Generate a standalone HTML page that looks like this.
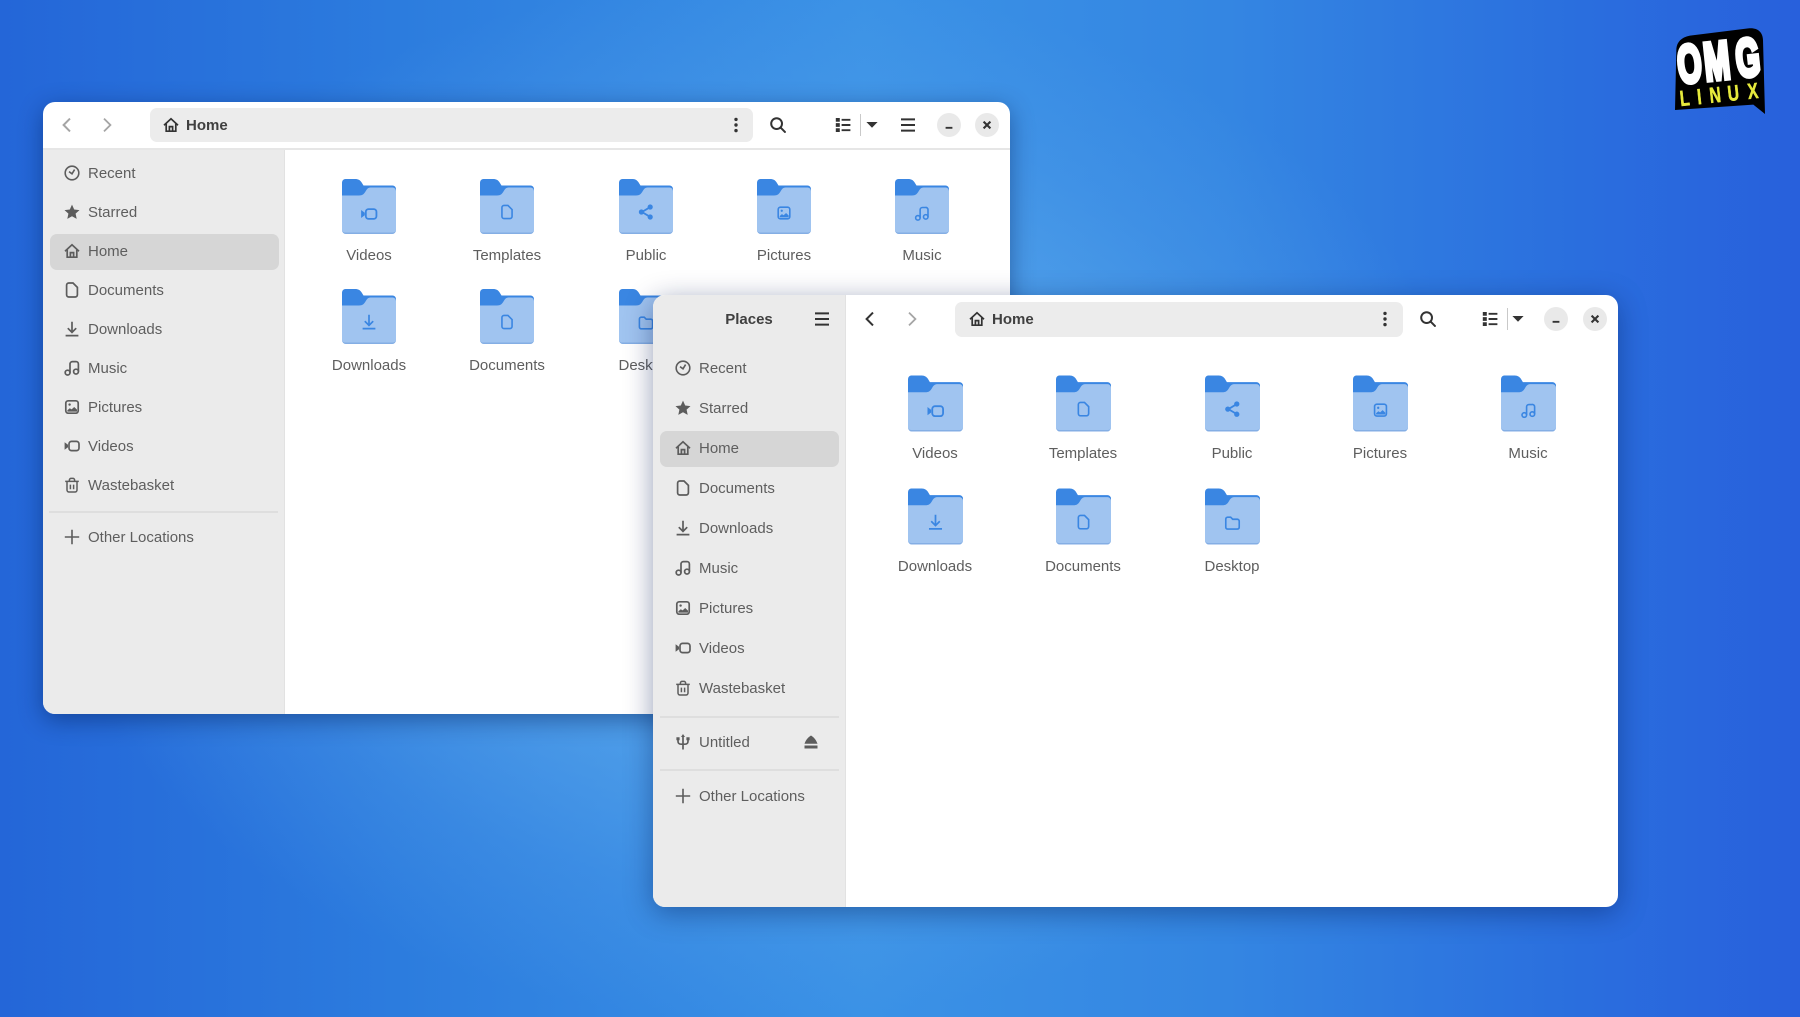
<!DOCTYPE html>
<html lang="en">
<head>
<meta charset="utf-8">
<title>Files</title>
<style>
html,body{margin:0;padding:0;width:1800px;height:1017px;overflow:hidden}
body{position:relative;font-family:"Liberation Sans",sans-serif;background-color:#2f7ee0;
background-image:radial-gradient(ellipse 720px 520px at 760px 500px,rgba(108,184,240,.85) 0%,rgba(100,176,238,.6) 40%,rgba(90,165,235,.25) 75%,rgba(90,165,235,0) 100%),linear-gradient(90deg,#2466d8 0%,#2c7cde 22%,#3b92e6 48%,#3486e2 68%,#2a6ede 88%,#2860dc 100%)}
.win{position:absolute;background:#fff;border-radius:12px;overflow:hidden;filter:blur(.35px)}
.shadow{position:absolute;border-radius:12px}
.side{position:absolute;left:0;background:#ebebeb}
.t{position:absolute;font-size:15px;line-height:20px;margin-top:-9px;color:#5e5e5e;white-space:nowrap}
.c{transform:translateX(-50%)}
.b{font-weight:bold;color:#404040}
.i{position:absolute;width:16px;height:16px;margin:-8px 0 0 -8px;color:#5c5c5c;overflow:visible}
.d{color:#333}
.l{color:#a5a5a5}
.f{position:absolute;color:#3a86e2}
.hl{position:absolute;background:#d6d6d6;border-radius:7px}
.path{position:absolute;background:#ececec;border-radius:7px}
.rnd{position:absolute;width:24px;height:24px;margin:-12px 0 0 -12px;border-radius:50%;background:#e9e9e9}
.hr{position:absolute;height:2px;background:#dedede}
.vr{position:absolute;width:1px;height:22px;background:#c9c9c9}
</style>
</head>
<body>
<svg width="0" height="0" style="position:absolute">
<defs>
<symbol id="clock" viewBox="0 0 16 16"><g fill="none" stroke="currentColor" stroke-width="1.6"><circle cx="8" cy="8" r="6.8"/><path d="M5 6.6 8 8.8 10.6 4.6"/></g></symbol>
<symbol id="star" viewBox="0 0 16 16"><path fill="currentColor" d="M8 .6l2.2 4.9 5.3.6-3.9 3.5 1.1 5.3L8 12.2l-4.7 2.7 1.1-5.3L.5 6.1l5.3-.6z"/></symbol>
<symbol id="home" viewBox="0 0 16 16"><g fill="none" stroke="currentColor" stroke-width="1.7"><path d="M1 8.2 8 1.800l7 6.400"/><path d="M3.200 6.600V14.200h9.600V6.600"/><path d="M6.400 14V9.600h3.200V14"/></g></symbol>
<symbol id="doc" viewBox="0 0 16 16"><path fill="none" stroke="currentColor" stroke-width="1.7" d="M2.600 3.200A2.200 2.200 0 0 1 4.800 1H9l4.400 4.400v7.400A2.200 2.200 0 0 1 11.200 15H4.800a2.200 2.200 0 0 1-2.200-2.200z"/></symbol>
<symbol id="dl" viewBox="0 0 16 16"><g fill="none" stroke="currentColor" stroke-width="1.7"><path d="M8 .8v10.400"/><path d="M3.800 7.200 8 11.400l4.200-4.200"/><path d="M1.600 14.600h12.800"/></g></symbol>
<symbol id="music" viewBox="0 0 16 16"><g fill="none" stroke="currentColor" stroke-width="1.7"><circle cx="3.600" cy="12.600" r="2.400"/><circle cx="12" cy="11.600" r="2.400"/><path d="M6 12.600V4a2.400 2.400 0 0 1 2.400-2.400h3.200A2.400 2.400 0 0 1 14.400 4v7.600"/></g></symbol>
<symbol id="pic" viewBox="0 0 16 16"><rect x="1.800" y="1.800" width="12.400" height="12.400" rx="2.400" fill="none" stroke="currentColor" stroke-width="1.700"/><circle cx="5.600" cy="5.600" r="1.200" fill="currentColor"/><path fill="currentColor" d="M3.400 12.600v-1.400l2.400-2 1.800 1.200 2.600-2.400 2.800 2.600v2z"/></symbol>
<symbol id="vid" viewBox="0 0 16 16"><rect x="5" y="3.400" width="10" height="9.200" rx="2.600" fill="none" stroke="currentColor" stroke-width="1.700"/><path fill="currentColor" d="M.6 4.200 4 6.800v2.400L.6 11.800z"/></symbol>
<symbol id="trash" viewBox="0 0 16 16"><g fill="none" stroke="currentColor" stroke-width="1.500"><path d="M1.200 4.400h13.600"/><path d="M5.400 4.400V3A1.600 1.600 0 0 1 7 1.400h2A1.600 1.600 0 0 1 10.600 3v1.400"/><path d="M3 4.400V13a2 2 0 0 0 2 2h6a2 2 0 0 0 2-2V4.400"/><path d="M6.400 7.600v4.600M9.600 7.600v4.600"/></g></symbol>
<symbol id="plus" viewBox="0 0 16 16"><path fill="none" stroke="currentColor" stroke-width="1.600" d="M8 .8v14.400M.8 8h14.400"/></symbol>
<symbol id="usb" viewBox="0 0 16 16"><g fill="none" stroke="currentColor" stroke-width="1.700"><path d="M8 1.500V15.500"/><path d="M3 5v2.200C3 9 4.200 10.200 6 10.200h4c1.800 0 3-1.200 3-3V5"/></g><path fill="currentColor" d="M8 0l2 3H6zM1.400 3.200h3.200v3H1.400zM11.400 3.200h3.200v3h-3.200z"/></symbol>
<symbol id="eject" viewBox="0 0 16 16"><path fill="currentColor" d="M8 1.500C10.500 3 13 5.500 14.500 9.800H1.500C3 5.500 5.500 3 8 1.500zM1.500 11.500h13v3h-13z"/></symbol>
<symbol id="back" viewBox="0 0 16 16"><path fill="none" stroke="currentColor" stroke-width="2" d="M11 1.600 4.600 8l6.400 6.400"/></symbol>
<symbol id="fwd" viewBox="0 0 16 16"><path fill="none" stroke="currentColor" stroke-width="1.800" d="M5 1.600 11.400 8 5 14.400"/></symbol>
<symbol id="search" viewBox="0 0 16 16"><g fill="none" stroke="currentColor" stroke-width="2"><circle cx="6.600" cy="6.600" r="5.400"/><path d="M10.600 10.600 15.600 15.600"/></g></symbol>
<symbol id="list" viewBox="0 0 16 16"><path fill="currentColor" d="M.8 1h4v3.800h-4zM.8 6.100h4v3.800h-4zM.8 11.200h4V15h-4zM6.600 1.900h8.800v1.900H6.600zM6.600 7.050h8.800v1.900H6.600zM6.600 12.200h8.800v1.900H6.600z"/></symbol>
<symbol id="caret" viewBox="0 0 16 16"><path fill="currentColor" d="M2.400 5h11.200L8 10.800z"/></symbol>
<symbol id="hamb" viewBox="0 0 16 16"><path fill="none" stroke="currentColor" stroke-width="2" d="M1 2.400h14M1 8h14M1 13.600h14"/></symbol>
<symbol id="kebab" viewBox="0 0 16 16"><g fill="currentColor"><circle cx="8" cy="2.400" r="1.700"/><circle cx="8" cy="8" r="1.700"/><circle cx="8" cy="13.600" r="1.700"/></g></symbol>
<symbol id="min" viewBox="0 0 16 16"><path fill="none" stroke="currentColor" stroke-width="1.900" d="M4.600 10.800h6.800"/></symbol>
<symbol id="x" viewBox="0 0 16 16"><path fill="none" stroke="currentColor" stroke-width="2.100" d="M4.600 4.600l6.800 6.800M11.400 4.600l-6.800 6.800"/></symbol>
<symbol id="share" viewBox="0 0 16 16"><path fill="none" stroke="currentColor" stroke-width="1.800" d="M12 3.200 4 8l8 4.800"/><g fill="currentColor"><circle cx="12.200" cy="3" r="2.600"/><circle cx="3.400" cy="8" r="2.600"/><circle cx="12.200" cy="13" r="2.600"/></g></symbol>
<symbol id="fold" viewBox="0 0 16 16"><path fill="none" stroke="currentColor" stroke-width="1.600" d="M1.400 4a1.800 1.800 0 0 1 1.800-1.800h3l2 2h4.600a1.800 1.800 0 0 1 1.800 1.800v6a1.800 1.800 0 0 1-1.800 1.800H3.200A1.800 1.800 0 0 1 1.400 12z"/></symbol>
<symbol id="folder" viewBox="0 0 54 55">
<path fill="#3a86e2" d="M0 3.500A3.500 3.500 0 0 1 3.500 0H13c3.500 0 5 1.200 6.500 3.200L21.500 6.500H50.500A3.500 3.500 0 0 1 54 10V30H0z"/>
<path fill="#a0c4f0" d="M0 16.500H17C20.500 16.500 22 15 23.500 12.500 24.800 10.300 26 8.500 28.500 8.500H50.500A3.500 3.500 0 0 1 54 12V51A4 4 0 0 1 50 55H4A4 4 0 0 1 0 51z"/>
<path fill="#84aee4" d="M0 50.500A3 3 0 0 0 3 53.500H51A3 3 0 0 0 54 50.500V51A4 4 0 0 1 50 55H4A4 4 0 0 1 0 51z"/>
</symbol>
</defs>
</svg>

<!-- Window 1 -->
<div class="shadow" style="left:43px;top:102px;width:967px;height:612px;box-shadow:0 6px 24px rgba(0,25,80,.45)"></div>
<div class="win" style="left:43px;top:102px;width:967px;height:612px">
  <div style="position:absolute;left:0;top:46px;width:967px;height:2px;background:#e6e6e6"></div>
  <div class="side" style="top:48px;width:241px;height:564px;border-right:1px solid #e2e2e2"></div>
  <svg class="i l" style="left:24px;top:23px"><use href="#back"/></svg>
  <svg class="i l" style="left:64px;top:23px"><use href="#fwd"/></svg>
  <div class="path" style="left:107px;top:6px;width:603px;height:34px"></div>
  <svg class="i d" style="left:128px;top:23px"><use href="#home"/></svg>
  <div class="t b" style="left:143px;top:23px">Home</div>
  <svg class="i d" style="left:693px;top:23px"><use href="#kebab"/></svg>
  <svg class="i d" style="left:735px;top:23px"><use href="#search"/></svg>
  <svg class="i d" style="left:800px;top:23px"><use href="#list"/></svg>
  <div class="vr" style="left:817px;top:12px"></div>
  <svg class="i d" style="left:829px;top:23px"><use href="#caret"/></svg>
  <svg class="i d" style="left:865px;top:23px"><use href="#hamb"/></svg>
  <div class="rnd" style="left:906px;top:23px"></div>
  <svg class="i d" style="left:906px;top:23px"><use href="#min"/></svg>
  <div class="rnd" style="left:944px;top:23px"></div>
  <svg class="i d" style="left:944px;top:23px"><use href="#x"/></svg>

  <div class="hl" style="left:7px;top:132px;width:229px;height:36px"></div>
  <svg class="i" style="left:29px;top:71px"><use href="#clock"/></svg><div class="t" style="left:45px;top:71px">Recent</div>
  <svg class="i" style="left:29px;top:110px"><use href="#star"/></svg><div class="t" style="left:45px;top:110px">Starred</div>
  <svg class="i" style="left:29px;top:149px"><use href="#home"/></svg><div class="t" style="left:45px;top:149px">Home</div>
  <svg class="i" style="left:29px;top:188px"><use href="#doc"/></svg><div class="t" style="left:45px;top:188px">Documents</div>
  <svg class="i" style="left:29px;top:227px"><use href="#dl"/></svg><div class="t" style="left:45px;top:227px">Downloads</div>
  <svg class="i" style="left:29px;top:266px"><use href="#music"/></svg><div class="t" style="left:45px;top:266px">Music</div>
  <svg class="i" style="left:29px;top:305px"><use href="#pic"/></svg><div class="t" style="left:45px;top:305px">Pictures</div>
  <svg class="i" style="left:29px;top:344px"><use href="#vid"/></svg><div class="t" style="left:45px;top:344px">Videos</div>
  <svg class="i" style="left:29px;top:383px"><use href="#trash"/></svg><div class="t" style="left:45px;top:383px">Wastebasket</div>
  <div class="hr" style="left:6px;top:409px;width:229px"></div>
  <svg class="i" style="left:29px;top:435px"><use href="#plus"/></svg><div class="t" style="left:45px;top:435px">Other Locations</div>

  <svg class="f" style="left:299px;top:77px" width="54" height="55" viewBox="0 0 54 55"><use href="#folder" width="54" height="55"/><use href="#vid" x="18.500" y="26.500" width="17" height="17"/></svg><div class="t c" style="left:326px;top:153px">Videos</div>
  <svg class="f" style="left:437px;top:77px" width="54" height="55" viewBox="0 0 54 55"><use href="#folder" width="54" height="55"/><use href="#doc" x="19.500" y="25.500" width="15" height="15"/></svg><div class="t c" style="left:464px;top:153px">Templates</div>
  <svg class="f" style="left:576px;top:77px" width="54" height="55" viewBox="0 0 54 55"><use href="#folder" width="54" height="55"/><use href="#share" x="19" y="25" width="16" height="16"/></svg><div class="t c" style="left:603px;top:153px">Public</div>
  <svg class="f" style="left:714px;top:77px" width="54" height="55" viewBox="0 0 54 55"><use href="#folder" width="54" height="55"/><use href="#pic" x="19.500" y="26.500" width="15" height="15"/></svg><div class="t c" style="left:741px;top:153px">Pictures</div>
  <svg class="f" style="left:852px;top:77px" width="54" height="55" viewBox="0 0 54 55"><use href="#folder" width="54" height="55"/><use href="#music" x="19.500" y="27" width="15" height="15"/></svg><div class="t c" style="left:879px;top:153px">Music</div>

  <svg class="f" style="left:299px;top:187px" width="54" height="55" viewBox="0 0 54 55"><use href="#folder" width="54" height="55"/><use href="#dl" x="19" y="25" width="16" height="16"/></svg><div class="t c" style="left:326px;top:263px">Downloads</div>
  <svg class="f" style="left:437px;top:187px" width="54" height="55" viewBox="0 0 54 55"><use href="#folder" width="54" height="55"/><use href="#doc" x="19.500" y="25.500" width="15" height="15"/></svg><div class="t c" style="left:464px;top:263px">Documents</div>
  <svg class="f" style="left:576px;top:187px" width="54" height="55" viewBox="0 0 54 55"><use href="#folder" width="54" height="55"/><use href="#fold" x="19" y="26" width="16" height="16"/></svg><div class="t c" style="left:603px;top:263px">Desktop</div>
</div>

<!-- Window 2 -->
<div class="shadow" style="left:653px;top:295px;width:965px;height:612px;box-shadow:0 6px 28px rgba(0,25,80,.42)"></div>
<div class="win" style="left:653px;top:295px;width:965px;height:612px">
  <div class="side" style="top:0;width:192px;height:612px;border-right:1px solid #e2e2e2"></div>
  <div class="t b c" style="left:96px;top:24px">Places</div>
  <svg class="i d" style="left:169px;top:24px"><use href="#hamb"/></svg>
  <svg class="i d" style="left:217px;top:24px"><use href="#back"/></svg>
  <svg class="i l" style="left:259px;top:24px"><use href="#fwd"/></svg>
  <div class="path" style="left:302px;top:7px;width:448px;height:35px"></div>
  <svg class="i d" style="left:324px;top:24px"><use href="#home"/></svg>
  <div class="t b" style="left:339px;top:24px">Home</div>
  <svg class="i d" style="left:732px;top:24px"><use href="#kebab"/></svg>
  <svg class="i d" style="left:775px;top:24px"><use href="#search"/></svg>
  <svg class="i d" style="left:837px;top:24px"><use href="#list"/></svg>
  <div class="vr" style="left:854px;top:13px"></div>
  <svg class="i d" style="left:865px;top:24px"><use href="#caret"/></svg>
  <div class="rnd" style="left:903px;top:24px"></div>
  <svg class="i d" style="left:903px;top:24px"><use href="#min"/></svg>
  <div class="rnd" style="left:941.500px;top:24px"></div>
  <svg class="i d" style="left:941.500px;top:24px"><use href="#x"/></svg>

  <div class="hl" style="left:7px;top:136px;width:179px;height:36px"></div>
  <svg class="i" style="left:30px;top:73px"><use href="#clock"/></svg><div class="t" style="left:46px;top:73px">Recent</div>
  <svg class="i" style="left:30px;top:113px"><use href="#star"/></svg><div class="t" style="left:46px;top:113px">Starred</div>
  <svg class="i" style="left:30px;top:153px"><use href="#home"/></svg><div class="t" style="left:46px;top:153px">Home</div>
  <svg class="i" style="left:30px;top:193px"><use href="#doc"/></svg><div class="t" style="left:46px;top:193px">Documents</div>
  <svg class="i" style="left:30px;top:233px"><use href="#dl"/></svg><div class="t" style="left:46px;top:233px">Downloads</div>
  <svg class="i" style="left:30px;top:273px"><use href="#music"/></svg><div class="t" style="left:46px;top:273px">Music</div>
  <svg class="i" style="left:30px;top:313px"><use href="#pic"/></svg><div class="t" style="left:46px;top:313px">Pictures</div>
  <svg class="i" style="left:30px;top:353px"><use href="#vid"/></svg><div class="t" style="left:46px;top:353px">Videos</div>
  <svg class="i" style="left:30px;top:393px"><use href="#trash"/></svg><div class="t" style="left:46px;top:393px">Wastebasket</div>
  <div class="hr" style="left:7px;top:421px;width:179px"></div>
  <svg class="i" style="left:30px;top:447px"><use href="#usb"/></svg><div class="t" style="left:46px;top:447px">Untitled</div>
  <svg class="i" style="left:158px;top:447px"><use href="#eject"/></svg>
  <div class="hr" style="left:7px;top:474px;width:179px"></div>
  <svg class="i" style="left:30px;top:501px"><use href="#plus"/></svg><div class="t" style="left:46px;top:501px">Other Locations</div>

  <svg class="f" style="left:254.500px;top:80px" width="55" height="57" viewBox="0 0 54 55"><use href="#folder" width="54" height="55"/><use href="#vid" x="18.500" y="26.500" width="17" height="17"/></svg><div class="t c" style="left:282px;top:158px">Videos</div>
  <svg class="f" style="left:402.500px;top:80px" width="55" height="57" viewBox="0 0 54 55"><use href="#folder" width="54" height="55"/><use href="#doc" x="19.500" y="25.500" width="15" height="15"/></svg><div class="t c" style="left:430px;top:158px">Templates</div>
  <svg class="f" style="left:551.500px;top:80px" width="55" height="57" viewBox="0 0 54 55"><use href="#folder" width="54" height="55"/><use href="#share" x="19" y="25" width="16" height="16"/></svg><div class="t c" style="left:579px;top:158px">Public</div>
  <svg class="f" style="left:699.500px;top:80px" width="55" height="57" viewBox="0 0 54 55"><use href="#folder" width="54" height="55"/><use href="#pic" x="19.500" y="26.500" width="15" height="15"/></svg><div class="t c" style="left:727px;top:158px">Pictures</div>
  <svg class="f" style="left:847.500px;top:80px" width="55" height="57" viewBox="0 0 54 55"><use href="#folder" width="54" height="55"/><use href="#music" x="19.500" y="27" width="15" height="15"/></svg><div class="t c" style="left:875px;top:158px">Music</div>

  <svg class="f" style="left:254.500px;top:193px" width="55" height="57" viewBox="0 0 54 55"><use href="#folder" width="54" height="55"/><use href="#dl" x="19" y="25" width="16" height="16"/></svg><div class="t c" style="left:282px;top:271px">Downloads</div>
  <svg class="f" style="left:402.500px;top:193px" width="55" height="57" viewBox="0 0 54 55"><use href="#folder" width="54" height="55"/><use href="#doc" x="19.500" y="25.500" width="15" height="15"/></svg><div class="t c" style="left:430px;top:271px">Documents</div>
  <svg class="f" style="left:551.500px;top:193px" width="55" height="57" viewBox="0 0 54 55"><use href="#folder" width="54" height="55"/><use href="#fold" x="19" y="26" width="16" height="16"/></svg><div class="t c" style="left:579px;top:271px">Desktop</div>
</div>

<!-- Logo -->
<svg style="position:absolute;left:1640px;top:10px" width="160" height="120" viewBox="0 0 480 360">
  <path fill="#000" d="M105 300 109 120C110 95 125 82 150 77L325 55C352 52 368 65 369 90L375 312 340 284z"/>
  <text transform="rotate(-6 240 205) translate(0 207) scale(.58 1)" y="0" x="202 340 505" font-family="Liberation Sans" font-weight="bold" font-size="160" fill="#fff" stroke="#fff" stroke-width="15">OMG</text>
  <text transform="rotate(-6 240 273) translate(0 276) scale(.72 1)" y="0" x="168 240 292 368 452" font-family="Liberation Sans" font-weight="bold" font-size="66" fill="#e6ea3c" stroke="#e6ea3c" stroke-width="1.500">LINUX</text>
</svg>
</body>
</html>
